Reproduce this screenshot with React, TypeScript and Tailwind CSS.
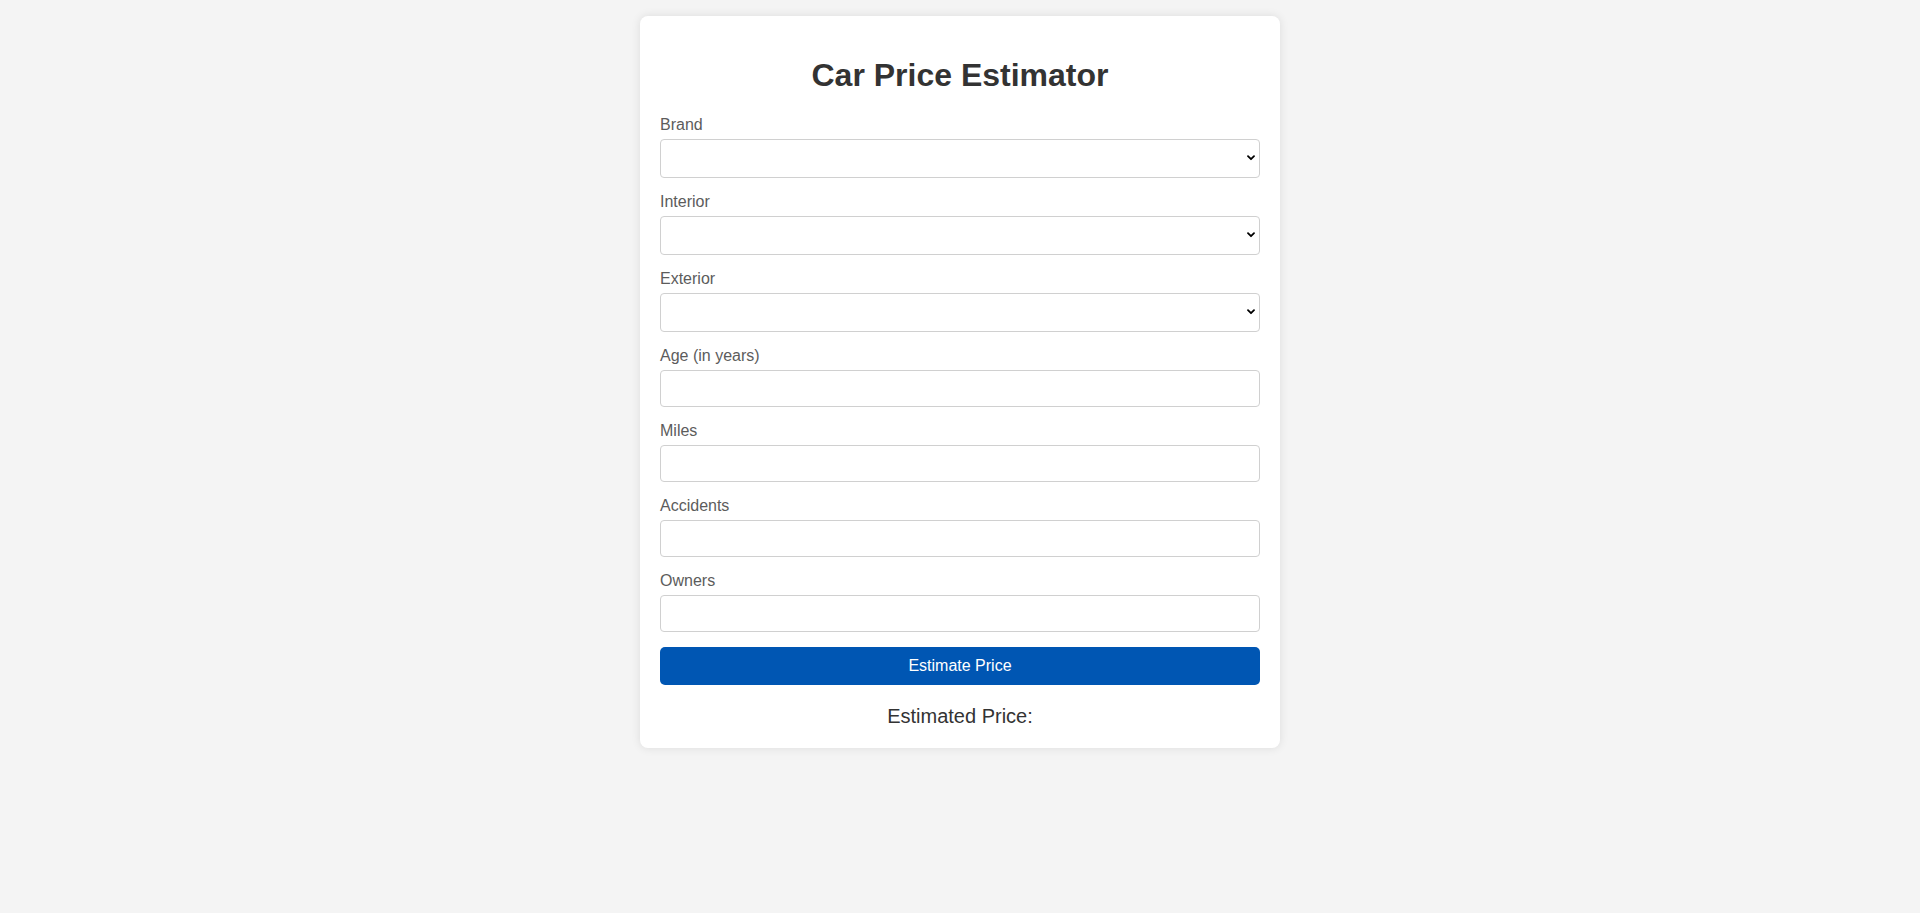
import React from "react";

const font = { fontFamily: '"Liberation Sans", Arial, sans-serif' };

function Chevron() {
  return (
    <svg
      className="pointer-events-none absolute right-[5px] top-1/2 -translate-y-1/2"
      width="8"
      height="6"
      viewBox="0 0 8 6"
      fill="none"
    >
      <path d="M1 1.2L4 4.2L7 1.2" stroke="#000" strokeWidth="1.8" strokeLinecap="round" strokeLinejoin="round" />
    </svg>
  );
}

function SelectField({ label }: { label: string }) {
  return (
    <div>
      <label className="block mb-[5px] text-[16px] leading-[normal] text-[#5c5c5c]">{label}</label>
      <div className="relative mb-[15px]">
        <select className="block w-full h-[39px] appearance-none border border-[#d0d0d0] rounded-[4px] bg-white px-2 text-[16px] text-black outline-none">
          <option value=""></option>
        </select>
        <Chevron />
      </div>
    </div>
  );
}

function InputField({ label }: { label: string }) {
  return (
    <div>
      <label className="block mb-[5px] text-[16px] leading-[normal] text-[#5c5c5c]">{label}</label>
      <input
        type="text"
        className="block w-full h-[37px] mb-[15px] border border-[#d0d0d0] rounded-[4px] bg-white px-2 text-[16px] text-black outline-none"
      />
    </div>
  );
}

export default function App() {
  return (
    <div className="min-h-[913px] bg-[#f4f4f4] pt-4 leading-[normal]" style={font}>
      <div className="mx-auto w-[640px] rounded-[8px] bg-white p-5 shadow-[0_0_10px_rgba(0,0,0,0.1)]">
        <h1 className="my-[21.44px] text-center text-[32px] leading-[normal] font-bold text-[#333]">Car Price Estimator</h1>
        <SelectField label="Brand" />
        <SelectField label="Interior" />
        <SelectField label="Exterior" />
        <InputField label="Age (in years)" />
        <InputField label="Miles" />
        <InputField label="Accidents" />
        <InputField label="Owners" />
        <button className="block w-full h-[38.4px] rounded-[5px] bg-[#0056b3] text-[16px] leading-[normal] text-white">
          Estimate Price
        </button>
        <div className="mt-5 text-center text-[20px] leading-[normal] text-[#333]">Estimated Price: </div>
      </div>
    </div>
  );
}
